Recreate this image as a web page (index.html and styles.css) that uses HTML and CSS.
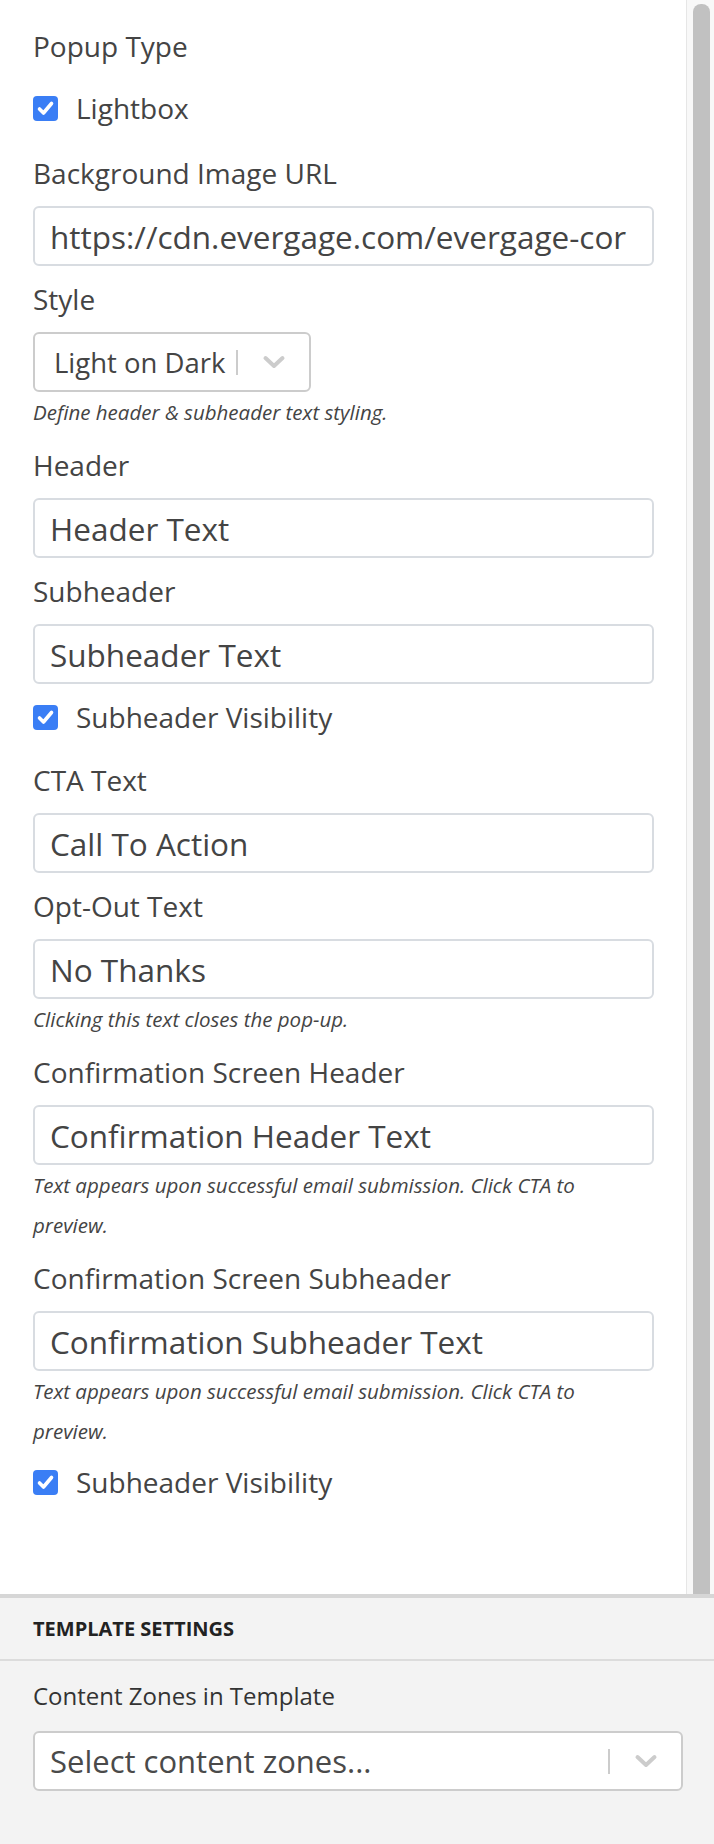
FILE: index.html
```html
<!DOCTYPE html>
<html lang="en">
<head>
<meta charset="utf-8">
<title>Popup Settings</title>
<link rel="stylesheet" href="styles.css">
</head>
<body>
<div class="panel">
  <div class="form">
    <div class="group group-type">
      <div class="label">Popup Type</div>
      <div class="check check-first"><span class="box"><svg viewBox="0 0 25 25" width="25" height="25"><polyline points="6.5,13 10.5,17 18.5,7.5" fill="none" stroke="#fff" stroke-width="3.6" stroke-linecap="round" stroke-linejoin="round"/></svg></span><span>Lightbox</span></div>
    </div>
    <div class="group">
      <div class="label">Background Image URL</div>
      <input class="input" type="text" value="https://cdn.evergage.com/evergage-cor">
    </div>
    <div class="group">
      <div class="label">Style</div>
      <div class="select select-style">
        <span class="select-value">Light on Dark</span>
        <span class="sep"></span>
        <svg class="chev" viewBox="0 0 24 14" width="24" height="14"><polyline points="3.5,3 12,11 20.5,3" fill="none" stroke="#cccccc" stroke-width="4" stroke-linecap="round" stroke-linejoin="round"/></svg>
      </div>
      <div class="help">Define header &amp; subheader text styling.</div>
    </div>
    <div class="group">
      <div class="label">Header</div>
      <input class="input" type="text" value="Header Text">
    </div>
    <div class="group group-check">
      <div class="label">Subheader</div>
      <input class="input" type="text" value="Subheader Text">
      <div class="check check-mid"><span class="box"><svg viewBox="0 0 25 25" width="25" height="25"><polyline points="6.5,13 10.5,17 18.5,7.5" fill="none" stroke="#fff" stroke-width="3.6" stroke-linecap="round" stroke-linejoin="round"/></svg></span><span>Subheader Visibility</span></div>
    </div>
    <div class="group">
      <div class="label">CTA Text</div>
      <input class="input" type="text" value="Call To Action">
    </div>
    <div class="group">
      <div class="label">Opt-Out Text</div>
      <input class="input" type="text" value="No Thanks">
      <div class="help">Clicking this text closes the pop-up.</div>
    </div>
    <div class="group">
      <div class="label">Confirmation Screen Header</div>
      <input class="input" type="text" value="Confirmation Header Text">
      <div class="help">Text appears upon successful email submission. Click CTA to preview.</div>
    </div>
    <div class="group">
      <div class="label">Confirmation Screen Subheader</div>
      <input class="input" type="text" value="Confirmation Subheader Text">
      <div class="help">Text appears upon successful email submission. Click CTA to preview.</div>
      <div class="check check-last"><span class="box"><svg viewBox="0 0 25 25" width="25" height="25"><polyline points="6.5,13 10.5,17 18.5,7.5" fill="none" stroke="#fff" stroke-width="3.6" stroke-linecap="round" stroke-linejoin="round"/></svg></span><span>Subheader Visibility</span></div>
    </div>
  </div>
  <div class="scrollbar"><div class="thumb"></div></div>
</div>
<div class="footer">
  <div class="footer-head">TEMPLATE SETTINGS</div>
  <div class="footer-body">
    <div class="label label-small">Content Zones in Template</div>
    <div class="select select-wide">
      <span class="select-value placeholder">Select content zones...</span>
      <span class="sep"></span>
      <svg class="chev" viewBox="0 0 24 14" width="24" height="14"><polyline points="3.5,3 12,11 20.5,3" fill="none" stroke="#cccccc" stroke-width="4" stroke-linecap="round" stroke-linejoin="round"/></svg>
    </div>
  </div>
</div>
</body>
</html>
```

FILE: styles.css
```css
* { box-sizing: border-box; }

html { background: #f3f3f3; }

body {
  margin: 0;
  font-family: "Open Sans", "Liberation Sans", sans-serif;
  color: #444;
}

.panel {
  display: flex;
  height: 1594px;
  background: #fff;
}

.form {
  flex: 1;
  padding: 28px 32px 0 33px;
  border-right: 1px solid #e6e6e6;
  overflow: hidden;
}

.scrollbar {
  width: 27px;
  background: #f8f8f8;
  padding: 4px 4px 0 6px;
  display: flex;
}

.thumb {
  flex: 1;
  background: #c1c1c1;
  border-radius: 8px 8px 0 0;
}

.group { margin-bottom: 15px; }
.group-type { margin-bottom: 29px; }
.group-check { margin-bottom: 27px; }

.label {
  font-size: 28px;
  line-height: 36px;
  margin-bottom: 15px;
  white-space: nowrap;
}

.input {
  display: block;
  width: 100%;
  height: 60px;
  margin: 0;
  padding: 0 15px;
  border: 2px solid #d8dce1;
  border-radius: 6px;
  background: #fff;
  font-family: "Open Sans", "Liberation Sans", sans-serif;
  font-size: 31.5px;
  color: #444;
  outline: none;
}

.help {
  font-size: 20.5px;
  line-height: 40px;
  font-style: italic;
  color: #444;
}

.check {
  display: flex;
  align-items: center;
  gap: 18px;
  height: 36px;
  margin-top: 12px;
  font-size: 28px;
  white-space: nowrap;
}

.check-first { margin-top: 26px; }
.check-mid { margin-top: 15px; }
.check-last { margin-top: 13px; }

.box {
  width: 25px;
  height: 25px;
  border-radius: 4px;
  background: #3a7ef5;
  flex: none;
  display: flex;
}

.select {
  display: flex;
  align-items: center;
  height: 60px;
  border: 2px solid #cccccc;
  border-radius: 6px;
  background: #fff;
  padding: 0 23px 0 19px;
}

.select-style { width: 278px; }
.select-wide { width: 100%; padding-left: 15px; }

.select-value {
  flex: 1;
  font-size: 27.5px;
  color: #444;
  white-space: nowrap;
  overflow: hidden;
}

.placeholder { font-size: 31px; color: #4a4a4a; }

.sep {
  width: 2px;
  height: 25px;
  background: #cccccc;
  flex: none;
}

.chev {
  flex: none;
  margin-left: 24px;
}

.footer {
  border-top: 4px solid #d6d6d6;
  background: #f3f3f3;
  min-height: 250px;
}

.footer-head {
  height: 63px;
  padding-left: 33px;
  display: flex;
  align-items: center;
  border-bottom: 2px solid #dcdcdc;
  font-size: 20px;
  font-weight: 700;
  color: #222;
}

.footer-body {
  padding: 17px 31px 53px 33px;
}

.label-small {
  font-size: 24px;
  margin-bottom: 17px;
  color: #333;
}
```
